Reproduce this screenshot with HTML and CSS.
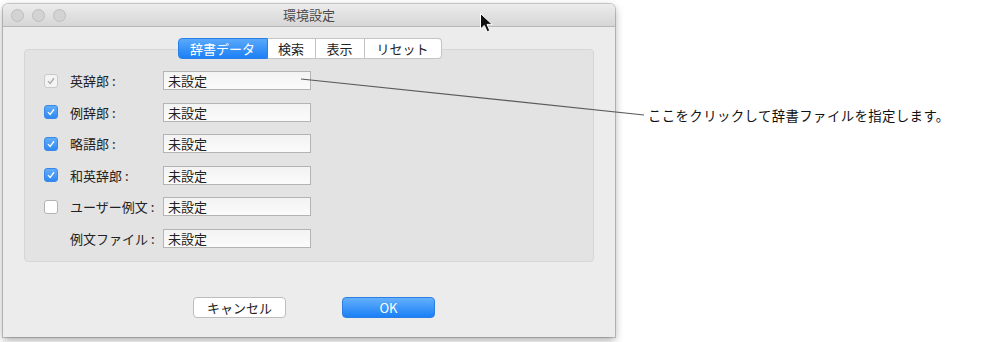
FILE: index.html
```html
<!DOCTYPE html>
<html lang="ja">
<head>
    <meta charset="UTF-8">
    <title>環境設定</title>
    <link rel="stylesheet" href="styles.css">
</head>
<body>
    <div class="stage">
        <div class="window">
            <div class="titlebar">
                <div class="lights">
                    <span class="light"></span>
                    <span class="light"></span>
                    <span class="light"></span>
                </div>
                <div class="title">環境設定</div>
            </div>

            <div class="content">
                <div class="tabs">
                    <div class="tab active">辞書データ</div>
                    <div class="tab">検索</div>
                    <div class="tab">表示</div>
                    <div class="tab">リセット</div>
                </div>

                <div class="group">
                    <div class="row">
                        <span class="check disabled"><svg viewBox="0 0 14 14"><path d="M3.5 7.2 L6 9.8 L10.5 3.8"/></svg></span>
                        <span class="label">英辞郎 :</span>
                        <span class="field">未設定</span>
                    </div>
                    <div class="row">
                        <span class="check on"><svg viewBox="0 0 14 14"><path d="M3.5 7.2 L6 9.8 L10.5 3.8"/></svg></span>
                        <span class="label">例辞郎 :</span>
                        <span class="field">未設定</span>
                    </div>
                    <div class="row">
                        <span class="check on"><svg viewBox="0 0 14 14"><path d="M3.5 7.2 L6 9.8 L10.5 3.8"/></svg></span>
                        <span class="label">略語郎 :</span>
                        <span class="field">未設定</span>
                    </div>
                    <div class="row">
                        <span class="check on"><svg viewBox="0 0 14 14"><path d="M3.5 7.2 L6 9.8 L10.5 3.8"/></svg></span>
                        <span class="label">和英辞郎 :</span>
                        <span class="field">未設定</span>
                    </div>
                    <div class="row">
                        <span class="check"></span>
                        <span class="label">ユーザー例文 :</span>
                        <span class="field">未設定</span>
                    </div>
                    <div class="row">
                        <span class="check none"></span>
                        <span class="label">例文ファイル :</span>
                        <span class="field">未設定</span>
                    </div>
                </div>

                <div class="buttons">
                    <button class="btn">キャンセル</button>
                    <button class="btn primary">OK</button>
                </div>
            </div>
        </div>

        <div class="note">ここをクリックして辞書ファイルを指定します。</div>

        <!-- callout line and mouse pointer drawn over the window -->
        <svg class="overlay" width="1000" height="342" viewBox="0 0 1000 342">
            <line x1="301" y1="79" x2="644" y2="115" stroke="#5a5a5a" stroke-width="1.2"/>
            <path d="M480.5 13.5 L480.5 29 L484.3 25.4 L487.2 31.8 L489.8 30.6 L487 24.4 L492.2 24.4 Z" fill="#111" stroke="#fff" stroke-width="1"/>
        </svg>
    </div>
</body>
</html>
```

FILE: styles.css
```css
body {
    margin: 0;
    background: #fff;
    font-family: "Noto Sans CJK JP", "Noto Sans", sans-serif;
    font-size: 13px;
    color: #222;
}
.stage {
    position: relative;
    display: flex;
    align-items: flex-start;
    height: 342px;
    padding: 4px 0 0 3px;
    box-sizing: border-box;
}
.window {
    width: 612px;
    height: 333px;
    background: #ececec;
    border-radius: 5px 5px 0 0;
    box-shadow: 0 0 0 1px rgba(0, 0, 0, 0.18), 0 3px 9px rgba(0, 0, 0, 0.35);
    overflow: hidden;
    flex-shrink: 0;
}
.titlebar {
    position: relative;
    height: 22px;
    background: linear-gradient(#ececec, #d6d6d6);
    border-bottom: 1px solid #b8b8b8;
    display: flex;
    align-items: center;
    justify-content: center;
}
.lights {
    position: absolute;
    left: 8px;
    top: 5px;
    display: flex;
    gap: 8px;
}
.light {
    width: 11px;
    height: 11px;
    border-radius: 50%;
    background: #d3d3d3;
    border: 1px solid #bdbdbd;
}
.title {
    color: #4a4a4a;
    font-size: 13px;
    line-height: 16px;
}
.content {
    padding-top: 11px;
}
.tabs {
    position: relative;
    z-index: 1;
    display: flex;
    justify-content: center;
    margin-bottom: -10px;
    padding-left: 1px;
}
.tab {
    height: 19px;
    line-height: 19px;
    text-align: center;
    background: #fff;
    border: 1px solid #c4c4c4;
    border-left: none;
    color: #222;
    font-size: 13px;
}
.tab:nth-child(1) {
    width: 88px;
}
.tab:nth-child(2) {
    width: 47px;
}
.tab:nth-child(3) {
    width: 48px;
}
.tab:nth-child(4) {
    width: 76px;
}
.tab:first-child {
    border-left: 1px solid #c4c4c4;
    border-radius: 4px 0 0 4px;
}
.tab:last-child {
    border-radius: 0 4px 4px 0;
}
.tab.active {
    background: linear-gradient(#5aa9fa, #1c80f6);
    border-color: #2a80e8;
    color: #fff;
}
.group {
    margin: 0 21px;
    padding: 21px 0 13px 19px;
    background: #e3e3e3;
    border: 1px solid #d6d6d6;
    border-radius: 4px;
    display: flex;
    flex-direction: column;
    gap: 12.5px;
}
.row {
    display: flex;
    align-items: center;
    height: 19px;
}
.check {
    width: 12px;
    height: 12px;
    border: 1px solid #b3b3b3;
    border-radius: 3px;
    background: #fff;
    display: flex;
    align-items: center;
    justify-content: center;
}
.check svg {
    width: 14px;
    height: 14px;
}
.check path {
    fill: none;
    stroke: #fff;
    stroke-width: 1.5;
}
.check.on {
    background: linear-gradient(#62adf9, #2f89f3);
    border-color: #3a88e6;
}
.check.disabled {
    background: #f4f4f4;
    border-color: #cacaca;
}
.check.disabled path {
    stroke: #a8a8a8;
}
.check.none {
    visibility: hidden;
}
.label {
    width: 93px;
    margin-left: 12px;
    white-space: nowrap;
    color: #222;
}
.field {
    width: 142px;
    height: 17px;
    line-height: 17px;
    padding-left: 4px;
    background: linear-gradient(#f3f3f3, #fbfbfb);
    border: 1px solid #b4b4b4;
    color: #222;
}
.buttons {
    display: flex;
    justify-content: center;
    gap: 56px;
    margin-top: 35px;
    padding-left: 10px;
}
.btn {
    width: 93px;
    height: 21px;
    font-family: inherit;
    font-size: 13px;
    line-height: 17px;
    padding: 0;
    background: #fff;
    border: 1px solid #bdbdbd;
    border-radius: 4px;
    color: #222;
}
.btn.primary {
    background: linear-gradient(#64b0fb, #1a80f6);
    border-color: #2b7fe3;
    color: #fff;
}
.note {
    margin-top: 103px;
    margin-left: 33px;
    font-size: 13.4px;
    line-height: 16px;
    letter-spacing: 0.4px;
    color: #111;
    white-space: nowrap;
}
.overlay {
    position: absolute;
    left: 0;
    top: 0;
    pointer-events: none;
}
```
